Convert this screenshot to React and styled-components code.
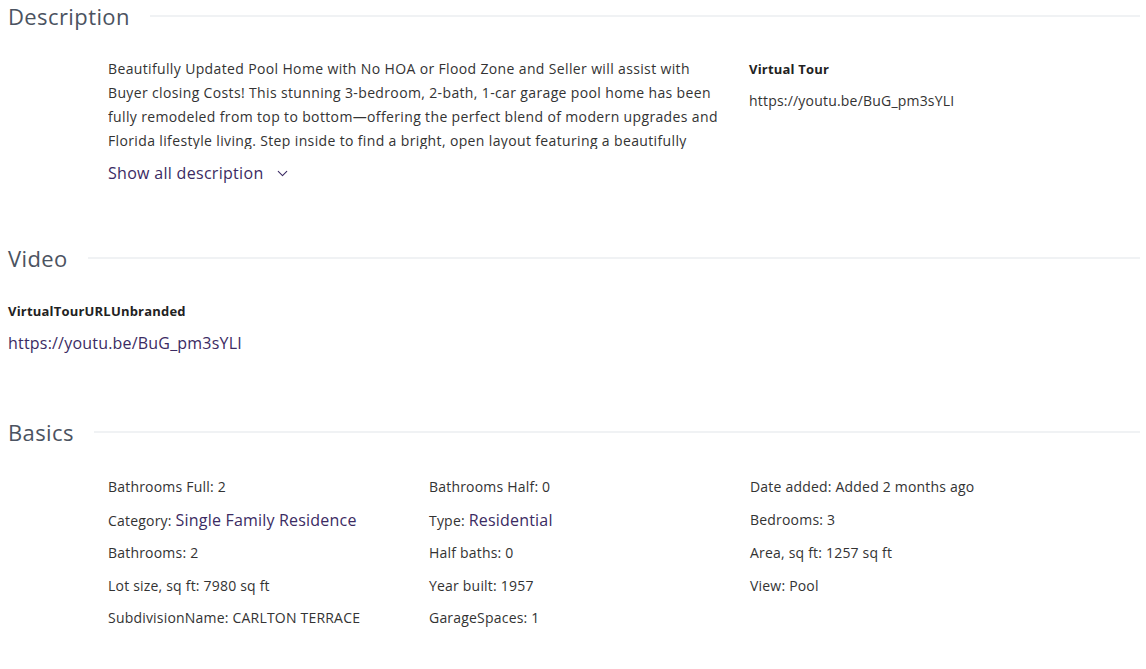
import React from "react"
import styled, { createGlobalStyle } from "styled-components"
import { ChevronDown } from "lucide-react"

const GlobalStyle = createGlobalStyle`
  body {
    margin: 0;
    background: #ffffff;
    font-family: "Open Sans", "Lato", sans-serif;
    color: #333333;
  }
`

const Page = styled.div`
  padding: 0 6px 0 8px;
`

const Section = styled.section`
  margin-bottom: ${({ $gap }) => $gap}px;
`

const SectionHeader = styled.div`
  display: flex;
  align-items: center;
  gap: 20px;
  height: 32px;

  h2 {
    margin: 0;
    font-size: 22px;
    font-weight: 400;
    letter-spacing: 0.4px;
    color: #4b5361;
  }

  &::after {
    content: "";
    flex: 1;
    height: 2px;
    background: #f0f2f4;
  }
`

const DescriptionRow = styled.div`
  display: grid;
  grid-template-columns: 615px 1fr;
  gap: 26px;
  padding: 25px 0 0 100px;
`

const DescriptionText = styled.p`
  margin: 0;
  font-size: 14px;
  letter-spacing: 0.36px;
  line-height: 24px;
  height: 92px;
  overflow: hidden;
  color: #333333;
`

const ShowAll = styled.button`
  display: flex;
  align-items: center;
  gap: 10px;
  margin-top: 13px;
  padding: 0;
  border: 0;
  background: none;
  font-family: inherit;
  font-size: 16px;
  letter-spacing: 0.3px;
  color: #3b2b63;
  cursor: pointer;
`

const SideColumn = styled.div`
  padding-top: 2px;
`

const FieldLabel = styled.div`
  font-size: 13px;
  font-weight: 700;
  letter-spacing: 0.2px;
  color: #222222;
  line-height: 20px;
`

const FieldValue = styled.div`
  margin-top: ${({ $top }) => $top}px;
  font-size: ${({ $size }) => $size}px;
  letter-spacing: 0.2px;
  color: ${({ $color }) => $color};
  line-height: 20px;
`

const VideoBody = styled.div`
  padding-top: 27px;
`

const BasicsGrid = styled.div`
  display: grid;
  grid-template-columns: repeat(3, 321px);
  row-gap: 12px;
  padding: 29px 0 0 100px;
`

const Item = styled.div`
  font-size: 14px;
  letter-spacing: 0.2px;
  line-height: 20.5px;
  color: #333333;
  white-space: nowrap;

  span {
    color: #3b2b63;
    font-size: 16px;
  }
`

const basics = [
  ["Bathrooms Full", "2"],
  ["Bathrooms Half", "0"],
  ["Date added", "Added 2 months ago"],
  ["Category", "Single Family Residence", true],
  ["Type", "Residential", true],
  ["Bedrooms", "3"],
  ["Bathrooms", "2"],
  ["Half baths", "0"],
  ["Area, sq ft", "1257 sq ft"],
  ["Lot size, sq ft", "7980 sq ft"],
  ["Year built", "1957"],
  ["View", "Pool"],
  ["SubdivisionName", "CARLTON TERRACE"],
  ["GarageSpaces", "1"],
]

const description =
  "Beautifully Updated Pool Home with No HOA or Flood Zone and Seller will assist with Buyer closing Costs! This stunning 3-bedroom, 2-bath, 1-car garage pool home has been fully remodeled from top to bottom—offering the perfect blend of modern upgrades and Florida lifestyle living. Step inside to find a bright, open layout featuring a beautifully renovated kitchen with quartz countertops, new cabinetry and stainless steel appliances."

export default function App() {
  return (
    <Page>
      <GlobalStyle />
      <Section $gap={58}>
        <SectionHeader>
          <h2>Description</h2>
        </SectionHeader>
        <DescriptionRow>
          <div>
            <DescriptionText>{description}</DescriptionText>
            <ShowAll>
              Show all description <ChevronDown size={17} strokeWidth={1.5} />
            </ShowAll>
          </div>
          <SideColumn>
            <FieldLabel>Virtual Tour</FieldLabel>
            <FieldValue $top={12} $size={14} $color="#333333">
              https://youtu.be/BuG_pm3sYLI
            </FieldValue>
          </SideColumn>
        </DescriptionRow>
      </Section>

      <Section $gap={63}>
        <SectionHeader>
          <h2>Video</h2>
        </SectionHeader>
        <VideoBody>
          <FieldLabel>VirtualTourURLUnbranded</FieldLabel>
          <FieldValue $top={12} $size={16} $color="#3b2b63">
            https://youtu.be/BuG_pm3sYLI
          </FieldValue>
        </VideoBody>
      </Section>

      <Section $gap={20}>
        <SectionHeader>
          <h2>Basics</h2>
        </SectionHeader>
        <BasicsGrid>
          {basics.map(([label, value, accent]) => (
            <Item key={label}>
              {label}: {accent ? <span>{value}</span> : value}
            </Item>
          ))}
        </BasicsGrid>
      </Section>
    </Page>
  )
}
